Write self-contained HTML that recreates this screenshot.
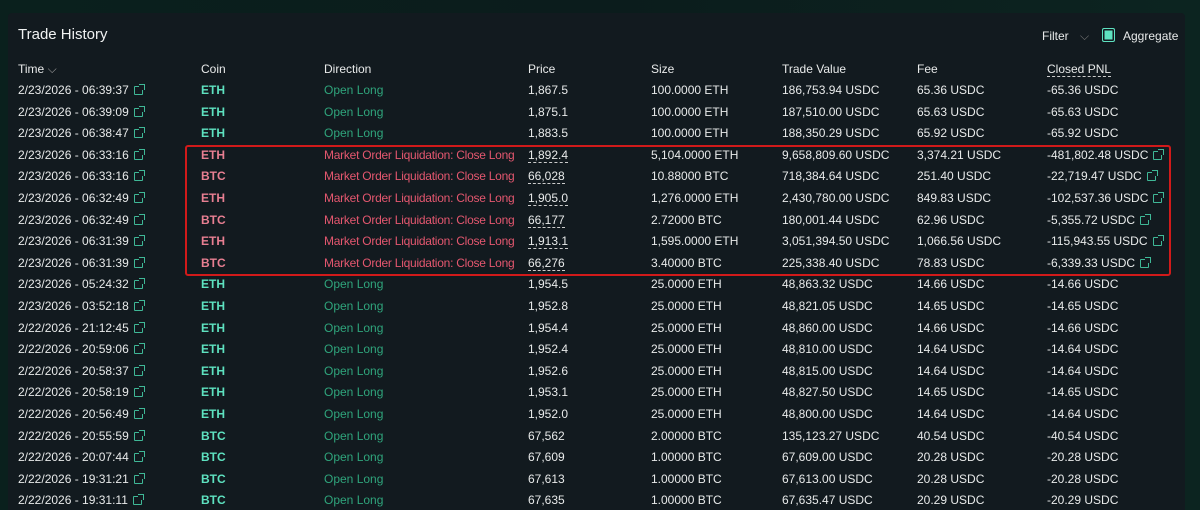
<!DOCTYPE html>
<html><head><meta charset="utf-8"><style>
*{margin:0;padding:0;box-sizing:border-box}
html,body{width:1200px;height:510px;overflow:hidden}
body{background:linear-gradient(90deg,#0a201d 0%,#0b1c1c 50%,#0c2420 100%);font-family:"Liberation Sans",Arial,sans-serif;color:#e8eaea;font-size:12px;position:relative}
.panel{position:absolute;left:8px;top:13px;width:1177px;height:497px;background:#121a1f;border-radius:4px 4px 0 0}
.t{position:absolute;white-space:nowrap;line-height:14px}
.title{left:18px;top:28px;font-size:15px;color:#f0f2f2}
.hd{top:62px;color:#e8eaea}
.coin{font-weight:bold;color:#5ee2c0}
.coin.r{color:#e87f92}
.ol{color:#2fa57c}
.liq{color:#e4576f;letter-spacing:-0.25px}
.dot{border-bottom:1px dashed #ccc}
.ic{display:inline-block;width:9px;height:9px;border:1.3px solid #3fb897;border-radius:1px;margin-left:5px;vertical-align:-1px;position:relative}
.ic:after{content:"";position:absolute;right:-3px;top:-3px;width:5px;height:5px;border-top:1.3px solid #3fb897;border-right:1.3px solid #3fb897;background:#121a1f}
.box{position:absolute;left:185px;top:145px;width:986px;height:131px;border:2.5px solid #d11a1a;border-radius:3px}
.cb{position:absolute;left:1102px;top:28px;width:13px;height:14px;border:1.5px solid #5ee2c0;border-radius:2px;background:#5ee2c0;box-shadow:inset 0 0 0 1.5px #121a1f}
</style></head><body>
<div class="panel"></div>
<div class="t title">Trade History</div>
<div class="t" style="left:1042px;top:29px">Filter <span style="color:#777;margin-left:8px">⌵</span></div>
<div class="cb"></div>
<div class="t" style="left:1123px;top:29px">Aggregate</div>
<div class="t hd" style="left:18px">Time <span style="color:#999">⌵</span></div>
<div class="t hd" style="left:201px">Coin</div>
<div class="t hd" style="left:324px">Direction</div>
<div class="t hd" style="left:528px">Price</div>
<div class="t hd" style="left:651px">Size</div>
<div class="t hd" style="left:782px">Trade Value</div>
<div class="t hd" style="left:917px">Fee</div>
<div class="t hd dot" style="left:1047px">Closed PNL</div>
<div id="rows"></div>
<div class="box"></div>
<script>
var d=[
["2/23/2026 - 06:39:37","ETH",0,"1,867.5","100.0000 ETH","186,753.94 USDC","65.36 USDC","-65.36 USDC"],
["2/23/2026 - 06:39:09","ETH",0,"1,875.1","100.0000 ETH","187,510.00 USDC","65.63 USDC","-65.63 USDC"],
["2/23/2026 - 06:38:47","ETH",0,"1,883.5","100.0000 ETH","188,350.29 USDC","65.92 USDC","-65.92 USDC"],
["2/23/2026 - 06:33:16","ETH",1,"1,892.4","5,104.0000 ETH","9,658,809.60 USDC","3,374.21 USDC","-481,802.48 USDC"],
["2/23/2026 - 06:33:16","BTC",1,"66,028","10.88000 BTC","718,384.64 USDC","251.40 USDC","-22,719.47 USDC"],
["2/23/2026 - 06:32:49","ETH",1,"1,905.0","1,276.0000 ETH","2,430,780.00 USDC","849.83 USDC","-102,537.36 USDC"],
["2/23/2026 - 06:32:49","BTC",1,"66,177","2.72000 BTC","180,001.44 USDC","62.96 USDC","-5,355.72 USDC"],
["2/23/2026 - 06:31:39","ETH",1,"1,913.1","1,595.0000 ETH","3,051,394.50 USDC","1,066.56 USDC","-115,943.55 USDC"],
["2/23/2026 - 06:31:39","BTC",1,"66,276","3.40000 BTC","225,338.40 USDC","78.83 USDC","-6,339.33 USDC"],
["2/23/2026 - 05:24:32","ETH",0,"1,954.5","25.0000 ETH","48,863.32 USDC","14.66 USDC","-14.66 USDC"],
["2/23/2026 - 03:52:18","ETH",0,"1,952.8","25.0000 ETH","48,821.05 USDC","14.65 USDC","-14.65 USDC"],
["2/22/2026 - 21:12:45","ETH",0,"1,954.4","25.0000 ETH","48,860.00 USDC","14.66 USDC","-14.66 USDC"],
["2/22/2026 - 20:59:06","ETH",0,"1,952.4","25.0000 ETH","48,810.00 USDC","14.64 USDC","-14.64 USDC"],
["2/22/2026 - 20:58:37","ETH",0,"1,952.6","25.0000 ETH","48,815.00 USDC","14.64 USDC","-14.64 USDC"],
["2/22/2026 - 20:58:19","ETH",0,"1,953.1","25.0000 ETH","48,827.50 USDC","14.65 USDC","-14.65 USDC"],
["2/22/2026 - 20:56:49","ETH",0,"1,952.0","25.0000 ETH","48,800.00 USDC","14.64 USDC","-14.64 USDC"],
["2/22/2026 - 20:55:59","BTC",0,"67,562","2.00000 BTC","135,123.27 USDC","40.54 USDC","-40.54 USDC"],
["2/22/2026 - 20:07:44","BTC",0,"67,609","1.00000 BTC","67,609.00 USDC","20.28 USDC","-20.28 USDC"],
["2/22/2026 - 19:31:21","BTC",0,"67,613","1.00000 BTC","67,613.00 USDC","20.28 USDC","-20.28 USDC"],
["2/22/2026 - 19:31:11","BTC",0,"67,635","1.00000 BTC","67,635.47 USDC","20.29 USDC","-20.29 USDC"]];
var h="";
d.forEach(function(r,i){var y=83+i*21.6;var L=r[2];
function c(x,s,cl){h+='<div class="t '+(cl||'')+'" style="left:'+x+'px;top:'+y+'px">'+s+'</div>';}
c(18,r[0]+'<span class="ic"></span>');
c(201,r[1],'coin'+(L?' r':''));
c(324,L?'Market Order Liquidation: Close Long':'Open Long',L?'liq':'ol');
c(528,L?'<span class="dot">'+r[3]+'</span>':r[3]);
c(651,r[4]);c(782,r[5]);c(917,r[6]);
c(1047,r[7]+(L?'<span class="ic"></span>':''));
});
document.getElementById('rows').innerHTML=h;
</script>
</body></html>
